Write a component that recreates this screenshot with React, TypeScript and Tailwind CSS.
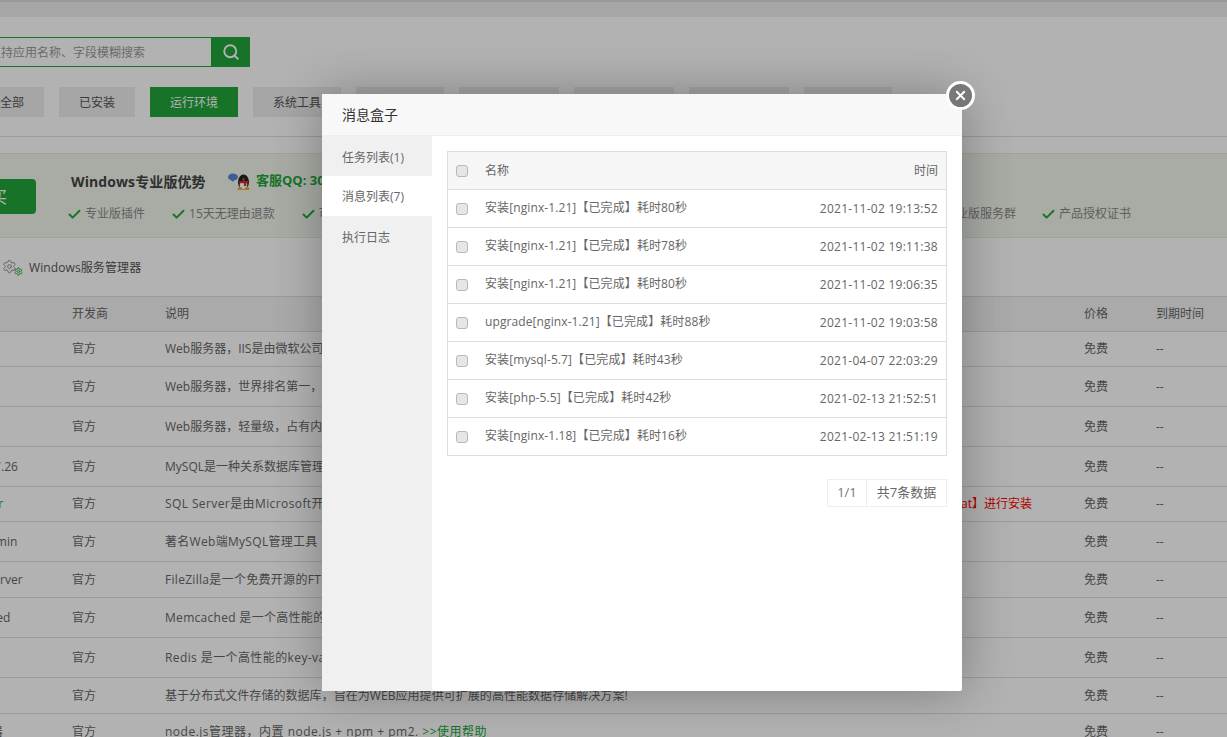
import { Search, Settings, Check, X } from "lucide-react";

const tabs = [
  { label: "全部", w: "w-[64px]", active: false, ml: "ml-0" },
  { label: "已安装", w: "w-[76px]", active: false, ml: "ml-[15px]" },
  { label: "运行环境", w: "w-[88px]", active: true, ml: "ml-[15px]" },
  { label: "系统工具", w: "w-[88px]", active: false, ml: "ml-[15px]" },
  { label: "", w: "w-[88px]", active: false, ml: "ml-[15px]" },
  { label: "", w: "w-[100px]", active: false, ml: "ml-[15px]" },
  { label: "", w: "w-[100px]", active: false, ml: "ml-[15px]" },
  { label: "", w: "w-[100px]", active: false, ml: "ml-[15px]" },
  { label: "", w: "w-[88px]", active: false, ml: "ml-[15px]" },
];

const rows = [
  { h: "h-[35px]", name: "", track: "", desc: "Web服务器，IIS是由微软公司提供的服务器" },
  { h: "h-[40px]", name: "", track: "", desc: "Web服务器，世界排名第一，使用广泛" },
  { h: "h-[40px]", name: "", track: "", desc: "Web服务器，轻量级，占有内存少" },
  { h: "h-[40px]", name: "MySQL 5.7.26", track: "", desc: "MySQL是一种关系数据库管理系统" },
  { h: "h-[35px]", name: "SQL Server", link: true, track: "tracking-[0.4px]", desc: "SQL Server是由Microsoft开发的数据库", warn: "at】进行安装" },
  { h: "h-[40px]", name: "phpMyAdmin", track: "tracking-[0.3px]", desc: "著名Web端MySQL管理工具" },
  { h: "h-[36px]", name: "FileZilla Server", track: "tracking-[0.3px]", desc: "FileZilla是一个免费开源的FTP软件" },
  { h: "h-[40px]", name: "Memcached", track: "tracking-[0.3px]", desc: "Memcached 是一个高性能的分布式内存对象缓存系统" },
  { h: "h-[40px]", name: "", track: "tracking-[0.4px]", desc: "Redis 是一个高性能的key-value数据库" },
  { h: "h-[36px]", name: "", track: "tracking-[0.05px]", desc: "基于分布式文件存储的数据库，旨在为WEB应用提供可扩展的高性能数据存储解决方案!" },
  { h: "h-[36px]", name: "PM2管理器", track: "tracking-[0.5px]", desc: "node.js管理器，内置 node.js + npm + pm2. ", help: true },
];

const messages = [
  ["安装[nginx-1.21]【已完成】耗时80秒", "2021-11-02 19:13:52"],
  ["安装[nginx-1.21]【已完成】耗时78秒", "2021-11-02 19:11:38"],
  ["安装[nginx-1.21]【已完成】耗时80秒", "2021-11-02 19:06:35"],
  ["upgrade[nginx-1.21]【已完成】耗时88秒", "2021-11-02 19:03:58"],
  ["安装[mysql-5.7]【已完成】耗时43秒", "2021-04-07 22:03:29"],
  ["安装[php-5.5]【已完成】耗时42秒", "2021-02-13 21:52:51"],
  ["安装[nginx-1.18]【已完成】耗时16秒", "2021-02-13 21:51:19"],
];

function Perk({ text }: { text: string }) {
  return (
    <div className="flex items-center">
      <Check className="w-[15px] h-[15px] text-[#20a53a] -ml-[1px] mr-[3px]" strokeWidth={3} />
      <span className="text-[12px] text-[#888]">{text}</span>
    </div>
  );
}

function QQIcon() {
  return (
    <svg width="23" height="17" viewBox="0 0 23 17" className="mr-[5px]">
      <ellipse cx="5" cy="4" rx="5" ry="3.6" fill="#5b86d6" />
      <path d="M3 7l2 2 1-2z" fill="#5b86d6" />
      <ellipse cx="15.5" cy="9" rx="5.5" ry="7.5" fill="#222" />
      <ellipse cx="15.5" cy="12" rx="3.8" ry="4.2" fill="#fff" />
      <rect x="11" y="8" width="9" height="2.2" fill="#d8261c" />
      <rect x="16" y="9" width="2.2" height="4" fill="#d8261c" />
      <ellipse cx="12" cy="15.8" rx="2.6" ry="1.2" fill="#f0a020" />
      <ellipse cx="19" cy="15.8" rx="2.6" ry="1.2" fill="#f0a020" />
      <path d="M14 5.5h3l-1.5 1.5z" fill="#f0a020" />
    </svg>
  );
}

function Box() {
  return (
    <input
      type="checkbox"
      className="appearance-none block w-[12px] h-[12px] rounded-[3px] border border-[#b8b8b8] bg-[#e6e6e6]"
    />
  );
}

function MessageBox() {
  return (
    <div className="absolute left-[322px] top-[94px] w-[640px] h-[597px] bg-white rounded-[2px] shadow-[1px_1px_50px_rgba(0,0,0,0.3)] flex flex-col">
      <div className="h-[42px] shrink-0 bg-[#f8f8f8] border-b border-[#eeeeee] pl-[20px] flex items-center text-[14px] text-[#333]">
        消息盒子
      </div>
      <div className="flex flex-1">
        <div className="w-[110px] bg-[#f0f0f0] text-[12px] text-[#666]">
          <div className="h-[40px] pl-[20px] pt-[3px] flex items-center">任务列表(1)</div>
          <div className="h-[40px] pl-[20px] pt-[2px] flex items-center bg-white">消息列表(7)</div>
          <div className="h-[40px] pl-[20px] pt-[3px] flex items-center">执行日志</div>
        </div>
        <div className="flex-1 pt-[15px] px-[15px]">
          <div className="border border-[#dddddd] text-[12px] text-[#666]">
            <div className="h-[37px] bg-[#f6f6f6] flex items-center pl-[8px] pr-[8px]">
              <Box />
              <span className="ml-[17px]">名称</span>
              <span className="ml-auto">时间</span>
            </div>
            {messages.map(([name, time], i) => (
              <div key={i} className="h-[38px] border-t border-[#dddddd] flex items-center pl-[8px] pr-[8px]">
                <Box />
                <span className="ml-[17px] -mt-[2px] tracking-[0.1px]">{name}</span>
                <span className="ml-auto tracking-[0.26px]">{time}</span>
              </div>
            ))}
          </div>
          <div className="flex justify-end mt-[23px] text-[13px] text-[#666]">
            <div className="flex h-[28px] border border-[#eeeeee]">
              <span className="w-[39px] flex items-center justify-center border-r border-[#eeeeee] text-[#777]">1/1</span>
              <span className="w-[79px] flex items-center justify-center">共7条数据</span>
            </div>
          </div>
        </div>
      </div>
    </div>
  );
}

export default function App() {
  return (
    <div className="relative w-[1227px] h-[737px] overflow-hidden bg-white font-['Open_Sans','Noto_Sans_CJK_SC',sans-serif]">
      <div className="w-[1300px] -ml-[60px] text-[12px] text-[#666]">
        <div className="h-[17px] bg-[#f0f0f0] border-t-[2px] border-[#dcdcdc]" />

        <div className="flex h-[30px] mt-[20px] ml-[38px]">
          <div className="w-[234px] border border-[#20a53a] pl-[10px] pt-[1px] flex items-center text-[12px] text-[#999]">
            支持应用名称、字段模糊搜索
          </div>
          <div className="w-[38px] bg-[#20a53a] flex items-center justify-center">
            <Search className="w-[18px] h-[18px] text-white" strokeWidth={2.5} />
          </div>
        </div>

        <div className="flex mt-[20px] ml-[40px] text-[12px]">
          {tabs.map((t, i) => (
            <div
              key={i}
              className={`${t.w} ${t.ml} h-[30px] pt-[2px] flex items-center justify-center ${t.active ? "bg-[#20a53a] text-white" : "bg-[#eeeeee] text-[#555]"}`}
            >
              {t.label}
            </div>
          ))}
        </div>

        <div className="h-[20px] border-b border-[#dddddd]" />

        <div className="mt-[16px] h-[85px] bg-[#f1f7ed] border-y border-[#e4e8e0] flex">
          <div className="w-[96px] h-[35px] mt-[25px] bg-[#20a53a] rounded-[4px] flex items-center justify-end pr-[29px] text-[16px] text-white whitespace-nowrap">
            立即购买
          </div>
          <div className="flex-1 pl-[32px] pt-[17px]">
            <div className="flex items-center pl-[3px] h-[20px]">
              <span className="w-[157px] text-[14px] font-bold tracking-[0.1px] text-[#444] whitespace-nowrap">Windows专业版优势</span>
              <QQIcon />
              <span className="text-[13px] font-bold text-[#20a53a] whitespace-nowrap">客服QQ: 3004323099</span>
            </div>
            <div className="flex items-center mt-[14px] gap-[27px]">
              <Perk text="专业版插件" />
              <Perk text="15天无理由退款" />
              <Perk text="可开具发票" />
              <div className="ml-auto mr-[109px] flex gap-[26px]">
                <Perk text="专业版服务群" />
                <Perk text="产品授权证书" />
              </div>
            </div>
          </div>
        </div>

        <div className="h-[58px] pt-[2px] flex items-center pl-[62px]">
          <span className="relative w-[27px] h-[16px] block">
            <Settings className="w-[15px] h-[15px] text-[#8a8a8a] -mt-[1px]" strokeWidth={1.5} />
            <Settings className="absolute left-[12px] top-[7px] w-[9px] h-[9px] text-[#20a53a]" strokeWidth={2.5} />
          </span>
          <span className="text-[12px] text-[#555] tracking-[0.1px]">Windows服务管理器</span>
        </div>

        <div className="grid grid-cols-[132px_93px_919px_72px_1fr] h-[36px] items-center bg-[#f4f4f4] border-y border-[#dddddd]">
          <span />
          <span>开发商</span>
          <span>说明</span>
          <span>价格</span>
          <span>到期时间</span>
        </div>
        {rows.map((r, i) => (
          <div key={i} className={`grid grid-cols-[132px_93px_919px_72px_1fr] ${r.h} items-center border-b border-[#dddddd]`}>
            <span className={`pl-[2px] whitespace-nowrap ${r.link ? "text-[#20a53a]" : ""}`}>{r.name}</span>
            <span>官方</span>
            <span className="flex justify-between whitespace-nowrap pr-[52px]">
              <span className={r.track}>
                {r.desc}
                {r.help && <span className="text-[#20a53a]">&gt;&gt;使用帮助</span>}
              </span>
              {r.warn && <span className="text-[#ff0000]">{r.warn}</span>}
            </span>
            <span>免费</span>
            <span>--</span>
          </div>
        ))}
      </div>

      <div className="absolute inset-0 bg-black/30" />

      <MessageBox />

      <button className="absolute left-[946px] top-[81px] w-[29px] h-[29px] rounded-full bg-[#787878] border-[3px] border-white flex items-center justify-center">
        <X className="w-[15px] h-[15px] text-white" strokeWidth={3} />
      </button>
    </div>
  );
}
